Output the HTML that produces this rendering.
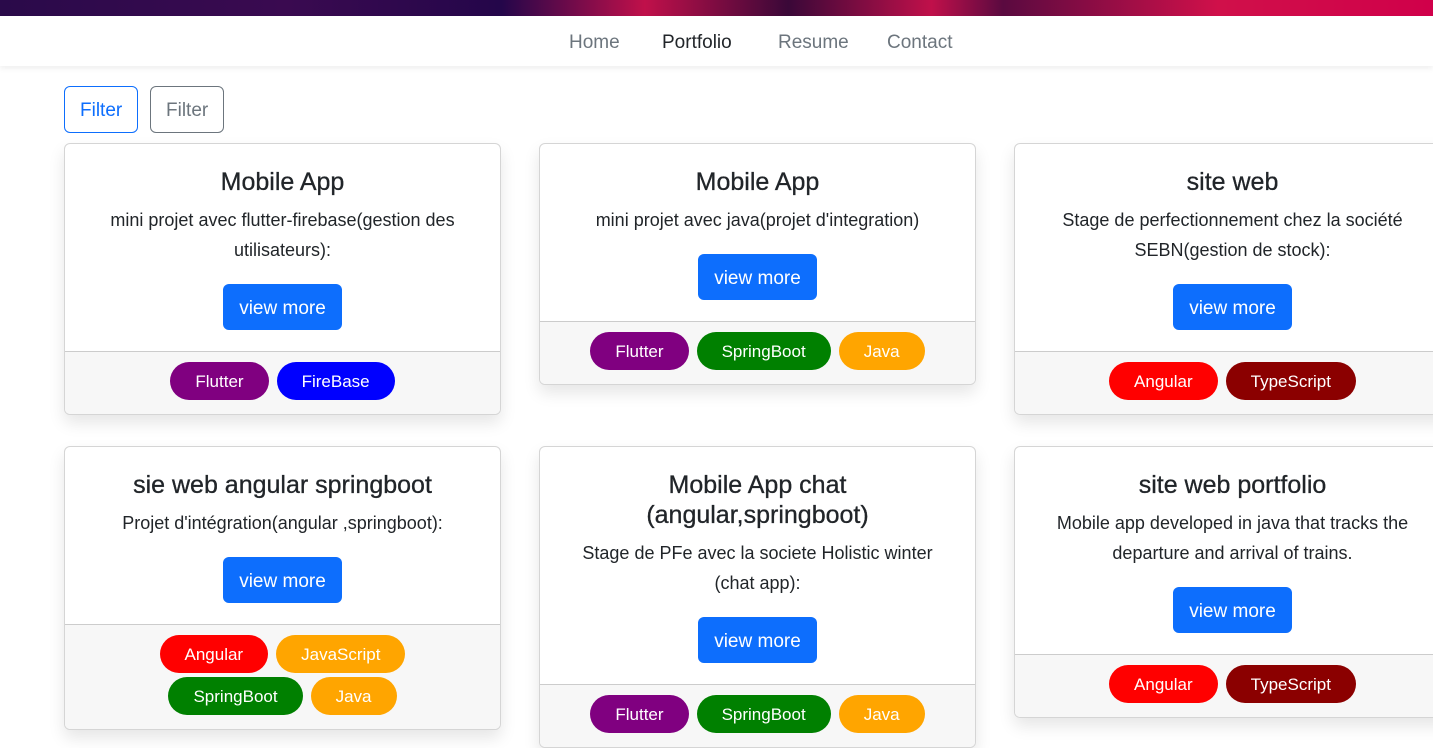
<!DOCTYPE html>
<html><head><meta charset="utf-8"><style>
*{box-sizing:border-box}
body{margin:0;width:1433px;height:747px;overflow:hidden;background:#fff;font-family:"Liberation Sans",sans-serif;color:#212529;position:relative}
.banner{position:absolute;left:0;top:0;width:1433px;height:16px;background:linear-gradient(90deg,#2a0a4a 0%,#3a0a50 20%,#24064a 35%,#c0104a 45%,#3a0838 55%,#c0104a 65%,#5a0a40 70%,#d0104a 85%,#d0004a 100%)}
.nav{position:absolute;top:16px;left:0;width:1433px;height:50px;background:#fff;box-shadow:0 3px 5px rgba(0,0,0,.06);text-align:center;font-size:19px}
.nav span{position:absolute;top:16px;color:#6c757d}
.btnf{position:absolute;top:86px;height:47px;border:1px solid;border-radius:6px;font-size:19px;line-height:47px;padding:0 15px}
.card{position:absolute;width:437px;border:1px solid #d5d5d5;border-radius:6px;background:#fff;box-shadow:0 8px 16px rgba(0,0,0,.1);overflow:hidden;text-align:center}
.body{padding:20px 15px 21px}
h3{margin:0;font-size:25px;font-weight:500;line-height:30px;padding-top:3px;-webkit-text-stroke:0.3px #212529}
p{margin:8px 0 0;font-size:18px;line-height:30px;color:#212529}
.vm{display:inline-block;margin-top:19px;background:#0d6efd;color:#fff;border-radius:6px;height:46px;line-height:42px;padding:4px 16px 0;font-size:19px}
.foot{border-top:1px solid #ccc;background:#f7f7f7;padding:10px 10px 14px}
.b{display:inline-block;height:38px;line-height:40px;border-radius:19px;color:#fff;font-size:17px;padding:0 25px;margin:0 4px}
.row{margin-bottom:4px}
</style></head><body>
<div class="banner"></div>
<div class="nav"><span style="left:569px">Home</span><span style="left:662px;color:#212529">Portfolio</span><span style="left:778px">Resume</span><span style="left:887px">Contact</span></div>
<div class="btnf" style="left:64px;border-color:#0d6efd;color:#0d6efd">Filter</div>
<div class="btnf" style="left:150px;border-color:#6c757d;color:#6c757d">Filter</div>

<div class="card" style="left:64px;top:143px"><div class="body"><h3>Mobile App</h3><p>mini projet avec flutter-firebase(gestion des utilisateurs):</p><div class="vm">view more</div></div>
<div class="foot"><span class="b" style="background:#800080">Flutter</span><span class="b" style="background:#0000ff">FireBase</span></div></div>

<div class="card" style="left:539px;top:143px"><div class="body"><h3>Mobile App</h3><p>mini projet avec java(projet d'integration)</p><div class="vm">view more</div></div>
<div class="foot"><span class="b" style="background:#800080">Flutter</span><span class="b" style="background:#008000">SpringBoot</span><span class="b" style="background:#ffa500">Java</span></div></div>

<div class="card" style="left:1014px;top:143px"><div class="body"><h3>site web</h3><p>Stage de perfectionnement chez la société SEBN(gestion de stock):</p><div class="vm">view more</div></div>
<div class="foot"><span class="b" style="background:#ff0000">Angular</span><span class="b" style="background:#8b0000">TypeScript</span></div></div>

<div class="card" style="left:64px;top:446px"><div class="body"><h3>sie web angular springboot</h3><p>Projet d'intégration(angular ,springboot):</p><div class="vm">view more</div></div>
<div class="foot"><div class="row"><span class="b" style="background:#ff0000">Angular</span><span class="b" style="background:#ffa500">JavaScript</span></div><div><span class="b" style="background:#008000">SpringBoot</span><span class="b" style="background:#ffa500">Java</span></div></div></div>

<div class="card" style="left:539px;top:446px"><div class="body"><h3>Mobile App chat<br>(angular,springboot)</h3><p>Stage de PFe avec la societe Holistic winter<br>(chat app):</p><div class="vm">view more</div></div>
<div class="foot"><span class="b" style="background:#800080">Flutter</span><span class="b" style="background:#008000">SpringBoot</span><span class="b" style="background:#ffa500">Java</span></div></div>

<div class="card" style="left:1014px;top:446px"><div class="body"><h3>site web portfolio</h3><p>Mobile app developed in java that tracks the departure and arrival of trains.</p><div class="vm">view more</div></div>
<div class="foot"><span class="b" style="background:#ff0000">Angular</span><span class="b" style="background:#8b0000">TypeScript</span></div></div>
</body></html>
